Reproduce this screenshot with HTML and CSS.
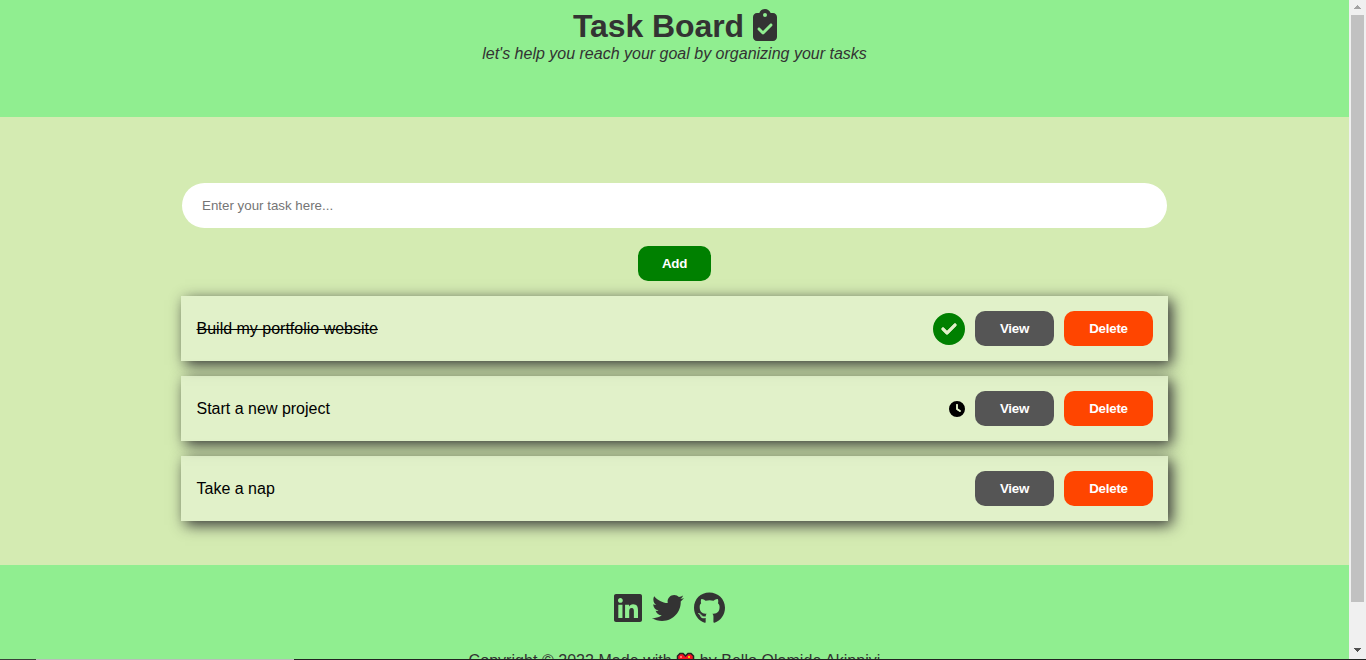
FILE: index.html
```html
<!DOCTYPE html>
<html lang="en">
<head>
<meta charset="utf-8">
<title>Task Board</title>
<link rel="stylesheet" href="styles.css">
</head>
<body>
<div class="window">
  <div class="viewport">
    <div class="page">
      <header class="header">
        <h1 class="title">Task Board
          <svg class="clipboard" viewBox="0 0 384 512"><path d="M192 0c-41.800 0-77.400 26.700-90.500 64H64C28.700 64 0 92.700 0 128V448c0 35.300 28.700 64 64 64H320c35.300 0 64-28.700 64-64V128c0-35.300-28.700-64-64-64H282.500C269.400 26.700 233.800 0 192 0zm0 64a32 32 0 1 1 0 64 32 32 0 1 1 0-64zM305 273L177 401c-9.400 9.400-24.600 9.400-33.900 0L79 337c-9.400-9.400-9.400-24.600 0-33.900s24.600-9.400 33.900 0l47 47L271 239c9.400-9.400 24.600-9.400 33.900 0s9.400 24.600 0 33.900z"/></svg>
        </h1>
        <p class="tagline">let's help you reach your goal by organizing your tasks</p>
      </header>
      <main class="main">
        <form class="task-form">
          <input class="task-input" type="text" placeholder="Enter your task here...">
          <button class="btn btn-add" type="button">Add</button>
        </form>
        <ul class="tasks">
          <li class="task">
            <span class="task-name done">Build my portfolio website</span>
            <svg class="status status-done" viewBox="0 0 512 512"><path d="M256 512A256 256 0 1 0 256 0a256 256 0 1 0 0 512zM369 209L241 337c-9.400 9.400-24.600 9.400-33.900 0l-64-64c-9.400-9.400-9.400-24.600 0-33.900s24.600-9.400 33.900 0l47 47L335 175c9.400-9.400 24.600-9.400 33.900 0s9.400 24.600 0 33.900z" stroke="#e1f0c9" stroke-width="0"/><path class="tick" d="M160 256l64 64 128-128"/></svg>
            <button class="btn btn-view" type="button">View</button>
            <button class="btn btn-delete" type="button">Delete</button>
          </li>
          <li class="task">
            <span class="task-name">Start a new project</span>
            <svg class="status" viewBox="0 0 512 512"><path d="M256 0a256 256 0 1 1 0 512A256 256 0 1 1 256 0zM232 120V256c0 8 4 15.500 10.700 20l96 64c11 7.400 25.900 4.400 33.300-6.700s4.400-25.900-6.700-33.300L280 243.200V120c0-13.300-10.700-24-24-24s-24 10.700-24 24z"/><path class="hands" d="M256 120v136l96 64"/></svg>
            <button class="btn btn-view" type="button">View</button>
            <button class="btn btn-delete" type="button">Delete</button>
          </li>
          <li class="task">
            <span class="task-name">Take a nap</span>
            <button class="btn btn-view" type="button">View</button>
            <button class="btn btn-delete" type="button">Delete</button>
          </li>
        </ul>
      </main>
      <footer class="footer">
        <div class="social">
          <svg class="linkedin" viewBox="0 0 448 512"><path d="M416 32H31.900C14.300 32 0 46.500 0 64.300v383.400C0 465.500 14.300 480 31.900 480H416c17.600 0 32-14.500 32-32.300V64.300c0-17.800-14.400-32.300-32-32.300zM135.400 416H69V202.200h66.500V416zm-33.200-243c-21.300 0-38.500-17.300-38.500-38.500S80.900 96 102.200 96c21.200 0 38.500 17.300 38.500 38.500 0 21.300-17.200 38.500-38.500 38.500zm282.100 243h-66.400V312c0-24.800-.5-56.700-34.500-56.700-34.600 0-39.900 27-39.900 54.900V416h-66.400V202.200h63.700v29.200h.9c8.900-16.800 30.600-34.500 62.900-34.500 67.200 0 79.700 44.300 79.700 101.900V416z"/></svg>
          <svg class="twitter" viewBox="0 0 512 512"><path d="M459.370 151.716c.325 4.548.325 9.097.325 13.645 0 138.720-105.583 298.558-298.558 298.558-59.452 0-114.680-17.219-161.137-47.106 8.447.974 16.568 1.299 25.340 1.299 49.055 0 94.213-16.568 130.274-44.832-46.132-.975-84.792-31.188-98.112-72.772 6.498.974 12.995 1.624 19.818 1.624 9.421 0 18.843-1.300 27.614-3.573-48.081-9.747-84.143-51.980-84.143-102.985v-1.299c13.969 7.797 30.214 12.670 47.431 13.319-28.264-18.843-46.781-51.005-46.781-87.391 0-19.492 5.197-37.360 14.294-52.954 51.655 63.675 129.300 105.258 216.365 109.807-1.624-7.797-2.599-15.918-2.599-24.040 0-57.828 46.782-104.934 104.934-104.934 30.213 0 57.502 12.670 76.670 33.137 23.715-4.548 46.456-13.320 66.599-25.340-7.798 24.366-24.366 44.833-46.132 57.827 21.117-2.273 41.584-8.122 60.426-16.243-14.292 20.791-32.161 39.308-52.628 54.253z"/></svg>
          <svg class="github" viewBox="0 0 496 512"><path d="M165.900 397.400c0 2-2.300 3.600-5.200 3.600-3.300.3-5.600-1.300-5.600-3.600 0-2 2.300-3.600 5.200-3.600 3-.3 5.600 1.300 5.600 3.600zm-31.100-4.500c-.7 2 1.300 4.300 4.300 4.900 2.600 1 5.600 0 6.200-2s-1.300-4.300-4.300-5.200c-2.600-.7-5.500.3-6.200 2.300zm44.200-1.700c-2.900.7-4.900 2.600-4.600 4.900.3 2 2.900 3.300 5.900 2.600 2.900-.7 4.900-2.600 4.600-4.600-.3-1.900-3-3.200-5.900-2.900zM244.800 8C106.100 8 0 113.300 0 252c0 110.900 69.800 205.800 169.500 239.200 12.800 2.300 17.300-5.600 17.300-12.100 0-6.200-.3-40.400-.3-61.400 0 0-70 15-84.700-29.800 0 0-11.400-29.100-27.800-36.600 0 0-22.900-15.700 1.600-15.400 0 0 24.900 2 38.600 25.800 21.900 38.600 58.600 27.500 72.900 20.900 2.300-16 8.800-27.100 16-33.700-55.900-6.200-112.300-14.300-112.300-110.500 0-27.500 7.600-41.300 23.600-58.900-2.600-6.500-11.100-33.300 2.600-67.900 20.900-6.500 69 27 69 27 20-5.600 41.500-8.500 62.800-8.500s42.800 2.900 62.800 8.500c0 0 48.100-33.600 69-27 13.700 34.700 5.200 61.400 2.600 67.900 16 17.700 25.800 31.500 25.800 58.900 0 96.500-58.900 104.200-114.800 110.500 9.200 7.900 17 22.900 17 46.400 0 33.700-.3 75.400-.3 83.600 0 6.500 4.600 14.400 17.300 12.100C428.200 457.800 496 362.900 496 252 496 113.300 383.500 8 244.800 8zM97.200 352.900c-1.300 1-1 3.300.7 5.200 1.600 1.600 3.900 2.300 5.200 1 1.300-1 1-3.300-.7-5.200-1.600-1.600-3.900-2.300-5.200-1zm-10.800-8.100c-.7 1.300.3 2.900 2.300 3.900 1.600 1 3.600.7 4.300-.7.7-1.300-.3-2.900-2.300-3.900-2-.6-3.600-.3-4.300.7zm32.400 35.600c-1.600 1.300-1 4.300 1.300 6.200 2.300 2.300 5.200 2.600 6.500 1 1.300-1.300.7-4.300-1.300-6.200-2.200-2.300-5.200-2.600-6.500-1zm-11.400-14.700c-1.600 1-1.600 3.600 0 5.900 1.600 2.300 4.300 3.300 5.600 2.300 1.600-1.300 1.600-3.900 0-6.200-1.400-2.300-4-3.300-5.600-2z"/></svg>
        </div>
        <p class="copyright">Copyright © 2022 Made with <svg class="heart" viewBox="0 0 19 18"><path d="M9.500 16.500L1.500 8.500V4L4 1.500h3L9.500 4 12 1.500h3L17.500 4v4.500z" fill="#f11424" stroke="#222" stroke-width="1.500"/><path d="M4 4h2v2H4z" fill="#ff7770"/><path d="M12 4h2v2h-2z" fill="#ffc400"/></svg> by Bello Olamide Akinniyi</p>
      </footer>
    </div>
    <div class="scrollbar">
      <svg class="arrow" viewBox="0 0 17 15"><path d="M5 11h7v-1h-1v-1h-1v-1h-1v-1h-1v1h-1v1h-1v1h-1z" transform="translate(0 -2)" fill="#a3a3a3"/></svg>
      <div class="thumb"></div>
      <svg class="arrow arrow-down" viewBox="0 0 17 17"><path d="M5 6h7v1h-1v1h-1v1h-1v1h-1v-1h-1v-1h-1v-1h-1z" fill="#505050"/></svg>
    </div>
  </div>
  <div class="edge"><i class="edge-start"></i><i class="edge-light"></i><i class="edge-end"></i></div>
</div>
</body>
</html>
```

FILE: styles.css
```css
* { box-sizing: border-box; margin: 0; padding: 0; }
body { overflow: hidden; font-family: "Liberation Sans", Arial, sans-serif; font-size: 16px; }
.window { display: flex; flex-direction: column; height: 660px; overflow: hidden; }
.viewport { display: flex; height: 659px; overflow: hidden; }
.page { width: 1349px; background: #d4ebb2; }
.header { height: 117px; padding-top: 8px; background: lightgreen; color: #333; text-align: center; }
.title { display: flex; justify-content: center; gap: 9px; padding-left: 1px; font-size: 32px; line-height: 36px; letter-spacing: -0.1px; }
.clipboard { width: 24px; height: 32px; margin-top: 1px; fill: currentColor; }
.tagline { padding-top: 1px; font-style: italic; line-height: 18px; }
.main { height: 448px; padding: 66px 181px 0; }
.task-form { display: flex; flex-direction: column; align-items: center; }
.task-input { width: 985px; height: 45px; padding: 0 20px; border: 0; border-radius: 25px; background: #fff; font: 13.333px "Liberation Sans", Arial, sans-serif; }
.task-input::placeholder { color: #757575; }
.btn { height: 35px; border: 0; border-radius: 10px; color: #fff; font: bold 13.333px "Liberation Sans", Arial, sans-serif; letter-spacing: -0.25px; }
.btn-add { width: 73px; margin: 18px 0 15px; background: green; }
.tasks { display: flex; flex-direction: column; gap: 15px; list-style: none; }
.task { display: flex; align-items: center; gap: 10px; height: 65px; padding: 15px; background: rgba(255, 255, 255, 0.3); box-shadow: 4px 4px 14px #333; }
.task-name { flex: 1; padding-left: 0.5px; color: #000; }
.done { text-decoration: line-through; }
.status { width: 16px; height: 16px; }
.status-done { width: 32px; height: 32px; fill: green; }
.tick, .hands { fill: none; stroke: #e1f0c9; stroke-width: 50; stroke-linecap: round; stroke-linejoin: round; }
.btn-view { width: 79px; background: #555; }
.btn-delete { width: 89px; background: orangered; }
.footer { height: 130px; padding-top: 27px; background: lightgreen; color: #333; }
.social { display: flex; justify-content: center; gap: 10px; height: 32px; padding-right: 10px; fill: currentColor; }
.linkedin { width: 28px; height: 32px; }
.twitter { width: 32px; height: 32px; }
.github { width: 31px; height: 32px; }
.copyright { margin-top: 28px; text-align: center; line-height: 18px; letter-spacing: 0.04px; white-space: nowrap; }
.heart { width: 19px; height: 18px; vertical-align: -4px; }
.scrollbar { display: flex; flex-direction: column; width: 17px; background: #f0f0f0; }
.arrow { width: 17px; height: 15px; }
.thumb { width: 13px; height: 587px; margin-left: 2px; background: #c1c1c1; }
.arrow-down { height: 17px; margin-top: auto; }
.edge { display: flex; height: 1px; }
.edge-start { width: 36px; background: #3a403a; }
.edge-light { width: 258px; background: #bbb; }
.edge-end { flex: 1; background: #222; }
```
